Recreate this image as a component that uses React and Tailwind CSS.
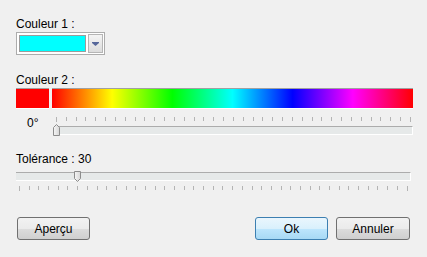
import React from "react";

const FONT = { fontFamily: '"Liberation Sans", Arial, sans-serif' };

function Ticks({ count, className }) {
  // tick marks under/over a trackbar, first and last are a bit longer
  const ticks = Array.from({ length: count }, (_, i) => i);
  return (
    <div className={`flex justify-between items-start h-[5px] ${className}`}>
      {ticks.map((i) => (
        <div
          key={i}
          className={`w-px bg-[#b4b4b4] ${i === 0 || i === count - 1 ? "h-[5px]" : "h-[4px]"}`}
        />
      ))}
    </div>
  );
}

function Track({ className }) {
  return (
    <div
      className={`h-[9px] border-t border-t-[#acacac] border-b border-b-white border-r border-r-white bg-[#e6e9e9] ${className}`}
    />
  );
}

function Thumb({ up }) {
  return up ? (
    <svg width="7" height="12" viewBox="0 0 7 12">
      <defs>
        <linearGradient id="tu" x1="0" y1="0" x2="1" y2="0">
          <stop offset="0" stopColor="#f6f6f6" />
          <stop offset="1" stopColor="#d6d6d6" />
        </linearGradient>
      </defs>
      <path d="M0.5 3.5 L3.5 0.5 L6.5 3.5 V11.5 H0.5 Z" fill="url(#tu)" stroke="#8c8c8c" />
    </svg>
  ) : (
    <svg width="7" height="11" viewBox="0 0 7 11">
      <defs>
        <linearGradient id="td" x1="0" y1="0" x2="1" y2="0">
          <stop offset="0" stopColor="#f6f6f6" />
          <stop offset="1" stopColor="#d6d6d6" />
        </linearGradient>
      </defs>
      <path d="M0.5 0.5 H6.5 V7.5 L3.5 10.5 L0.5 7.5 Z" fill="url(#td)" stroke="#8c8c8c" />
    </svg>
  );
}

function WinButton({ children, primary, className }) {
  const look = primary
    ? "border-[#3c7fb1] bg-[linear-gradient(#eaf6fd_0%,#d9f0fc_50%,#bee6fd_50%,#a7d9f5_100%)]"
    : "border-[#707070] bg-[linear-gradient(#f2f2f2_0%,#ebebeb_50%,#dddddd_50%,#cfcfcf_100%)]";
  return (
    <button
      className={`h-[23px] rounded-[3px] border text-[12px] text-black leading-none flex items-center justify-center ${look} ${className}`}
    >
      {children}
    </button>
  );
}

export default function App() {
  return (
    <div
      style={FONT}
      className="w-[427px] h-[257px] bg-[#f0f0f0] pl-4 pr-[14px] pt-4 flex flex-col text-[12px] text-black overflow-hidden"
    >
      <div className="h-4 leading-4">Couleur 1 :</div>

      <div className="w-[89px] h-[23px] border border-[#acacac] bg-white flex items-center pl-[2px] gap-[2px]">
        <div className="w-[67px] h-[17px] border border-[#9c9c9c] bg-[#00ffff]" />
        <div className="w-[15px] h-[19px] border border-[#b5b5b5] bg-[linear-gradient(#f4f4f4,#dcdcdc)] flex items-center justify-center">
          <svg width="7" height="4" viewBox="0 0 7 4">
            <path d="M0 0 H7 V1 L3.5 4 L0 1 Z" fill="#56679a" />
          </svg>
        </div>
      </div>

      <div className="h-4 leading-4 mt-[17px]">Couleur 2 :</div>
      <div className="flex gap-[3px] h-[21px]">
        <div className="w-[33px] border-t border-t-[#a0a0a0] border-b border-b-white bg-[#ff0000]" />
        <div className="flex-1 border-t border-t-[#a0a0a0] border-b border-b-white bg-[linear-gradient(to_right,#ff0000,#ffff00,#00ff00,#00ffff,#0000ff,#ff00ff,#ff0000)]" />
      </div>

      <div className="flex mt-[5px] h-[22px]">
        <div className="w-[38px] pl-[11px] pt-px leading-4">0°</div>
        <div className="relative flex-1">
          <Ticks count={37} className="mt-[3px] px-[2px]" />
          <Track className="mt-[4px]" />
          <div className="absolute left-[-1px] top-[10px] flex">
            <Thumb up />
          </div>
        </div>
      </div>

      <div className="h-4 leading-4 mt-[15px]">Tolérance : 30</div>
      <div className="relative mt-[5px] mr-[2px]">
        <Track />
        <div className="absolute left-[58px] top-[-1px] flex">
          <Thumb />
        </div>
      </div>
      <Ticks count={41} className="mt-[5px] pl-[3px] pr-[5px]" />

      <div className="flex mt-[26px] mr-[3px]">
        <WinButton className="w-[73px] ml-px">Aperçu</WinButton>
        <div className="flex-1" />
        <WinButton primary className="w-[73px] mr-[8px]">
          Ok
        </WinButton>
        <WinButton className="w-[74px]">Annuler</WinButton>
      </div>
    </div>
  );
}
